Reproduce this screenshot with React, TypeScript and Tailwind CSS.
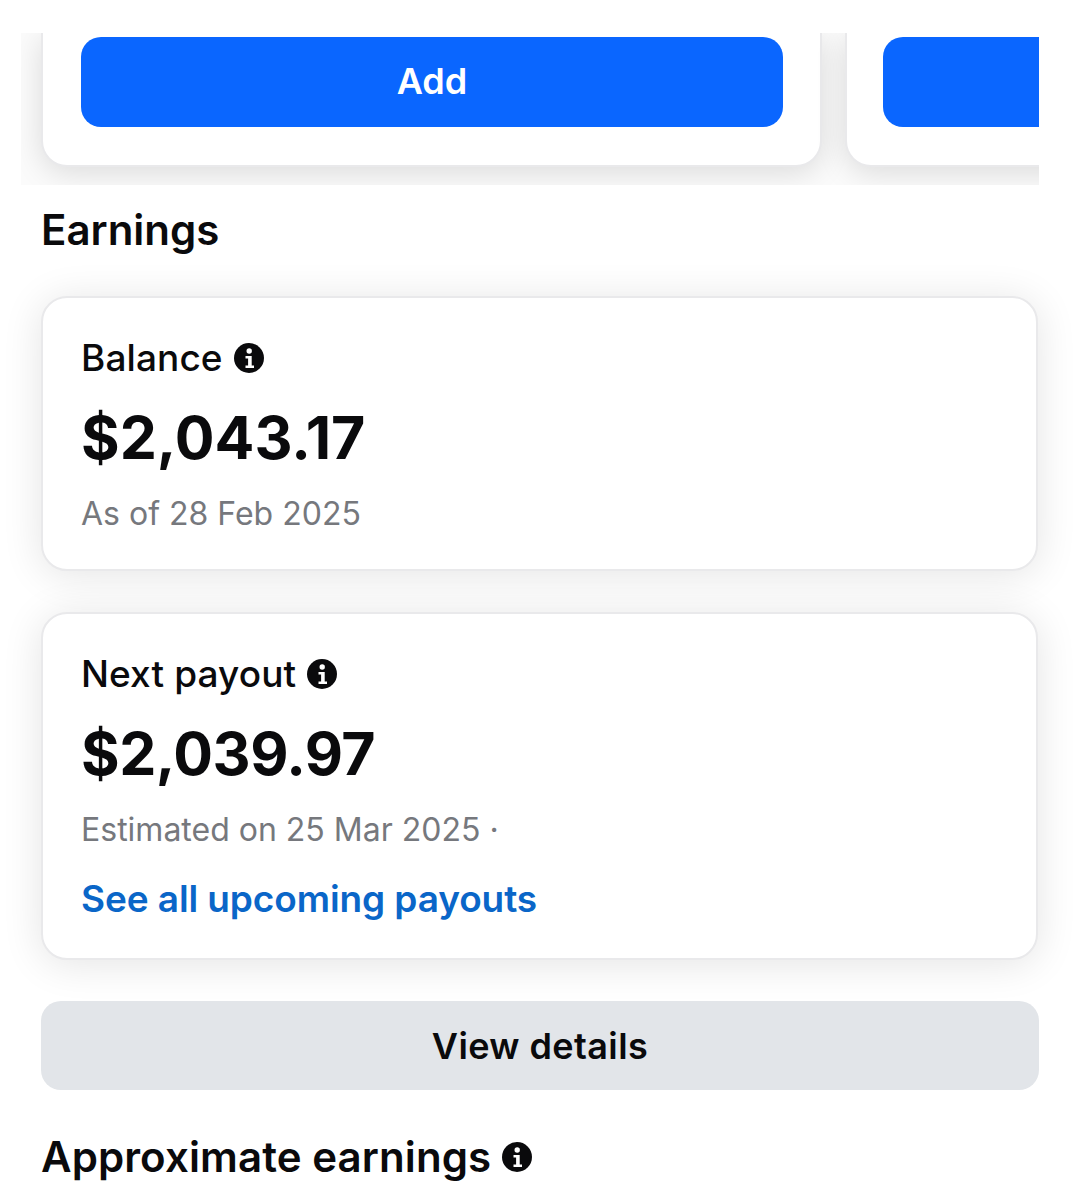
function Info({ className }: { className: string }) {
  return (
    <svg viewBox="0 0 30 30" className={className} aria-hidden="true">
      <circle cx="15" cy="15" r="15" fill="#0a0a0c" />
      <circle cx="15.2" cy="8" r="2.7" fill="#fff" />
      <path d="M11.5 13h6.2v9.4H20V25h-8.5v-2.6h2.6v-6.8h-2.6z" fill="#fff" />
    </svg>
  );
}

function StatCard({ title, amount, amountClass, children, className }: { title: string; amount: string; amountClass: string; children: React.ReactNode; className: string }) {
  return (
    <div className={`rounded-[26px] border-2 border-[#e9e9eb] bg-white pl-[38px] shadow-[0_4px_40px_rgba(0,0,0,0.11)] ${className}`}>
      <div className="flex items-center gap-[11px] pt-[36px] text-[37px] leading-[48px] font-medium tracking-[0.1px] text-[#0a0a0c]">
        <span>{title}</span>
        <Info className="h-[30px] w-[30px]" />
      </div>
      <div className={`mt-[20px] text-[59px] leading-[72px] font-bold text-[#0a0a0c] ${amountClass}`}>{amount}</div>
      {children}
    </div>
  );
}

export default function App() {
  return (
    <div className="h-[1200px] w-[1079px] overflow-hidden bg-white pt-[33px] font-['Inter',sans-serif]">
      <div className="mx-[21px] flex h-[152px] w-[1018px] gap-[23px] overflow-hidden bg-[#fbfbfb] pl-[20px]">
        <div className="h-[134px] w-[781px] shrink-0 rounded-b-[26px] border-x-2 border-b-2 border-[#e9e9eb] bg-white pl-[38px] pr-[37px] pt-[4px] shadow-[0_6px_30px_rgba(0,0,0,0.13)]">
          <div className="flex h-[90px] items-center justify-center rounded-[20px] bg-[#0a66ff] pb-[2px] text-[36px] font-semibold text-white">Add</div>
        </div>
        <div className="h-[134px] w-[400px] shrink-0 rounded-b-[26px] border-x-2 border-b-2 border-[#e9e9eb] bg-white pl-[36px] pt-[4px] shadow-[0_6px_30px_rgba(0,0,0,0.13)]">
          <div className="h-[90px] rounded-[20px] bg-[#0a66ff]" />
        </div>
      </div>

      <h2 className="mx-[41px] mt-[19px] text-[42px] leading-[52px] font-semibold text-[#0a0a0c]">Earnings</h2>

      <StatCard title="Balance" amount="$2,043.17" amountClass="tracking-[0px]" className="mx-[41px] mt-[40px] h-[275px] w-[997px]">
        <div className="mt-[18px] text-[32px] leading-[44px] text-[#76787d]">As of 28 Feb 2025</div>
      </StatCard>

      <StatCard title="Next payout" amount="$2,039.97" amountClass="tracking-[-0.5px]" className="mx-[41px] mt-[41px] h-[348px] w-[997px]">
        <div className="mt-[18px] text-[32px] leading-[44px] text-[#76787d]">Estimated on 25 Mar 2025 ·</div>
        <div className="mt-[23px] text-[37px] leading-[48px] font-semibold tracking-[-0.1px] text-[#0a66c8]">See all upcoming payouts</div>
      </StatCard>

      <div className="mx-[41px] mt-[41px] flex h-[89px] w-[998px] items-center justify-center rounded-[20px] bg-[#e2e5e9] text-[36px] font-semibold tracking-[0.4px] text-[#0a0a0c]">View details</div>

      <div className="mx-[41px] mt-[41px] flex items-center gap-[11px] text-[42px] leading-[52px] font-semibold tracking-[0.1px] text-[#0a0a0c]">
        <span>Approximate earnings</span>
        <Info className="h-[30px] w-[30px]" />
      </div>
    </div>
  );
}
